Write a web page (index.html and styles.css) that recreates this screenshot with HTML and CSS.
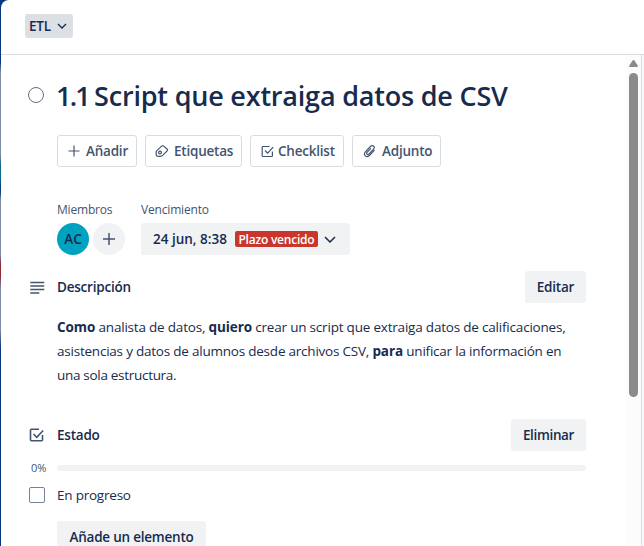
FILE: index.html
```html
<!DOCTYPE html>
<html lang="es">
<head>
<meta charset="utf-8">
<title>1.1 Script que extraiga datos de CSV</title>
<link rel="stylesheet" href="styles.css">
</head>
<body>
<div class="dialog">
  <header class="topbar">
    <button class="list-select"><span>ETL</span>
      <svg width="10" height="6" viewBox="0 0 10 6"><path d="M1 1l4 4 4-4"/></svg>
    </button>
  </header>
  <div class="body">
    <main class="card">
      <div class="title-row">
        <span class="circle"></span>
        <h1><span class="num">1.1 </span>Script que extraiga datos de CSV</h1>
      </div>

      <div class="actions">
        <button class="action add"><svg width="12" height="12" viewBox="0 0 12 12"><path d="M6 .5v11M.5 6h11"/></svg><span>Añadir</span></button>
        <button class="action tags"><svg width="14" height="14" viewBox="0 0 14 14"><path d="M1.600 6.900L7 1.900q.7-.6 1.400 0l3.900 3.400q.7.700 0 1.400L8 11.200Q6.900 12.300 5.400 12.300H3.300Q1.200 12.300 1.200 10.200V7.900q0-.6.400-1z"/><circle cx="5" cy="8.500" r="1.400"/></svg><span>Etiquetas</span></button>
        <button class="action check"><svg width="13" height="13" viewBox="0 0 13 13"><path d="M8.500 1.500H2q-.8 0-.8.8v8.400q0 .8.800.8h8.600q.8 0 .8-.8V6.500M4 5.500l2.600 2.700 5.600-6"/></svg><span>Checklist</span></button>
        <button class="action clip"><svg width="13" height="14" viewBox="0 0 13 14"><path d="M11.500 6.200L6.400 11.500c-3 3-6.800-.8-4-3.700l5-5.300c2.400-2.300 5.200.5 3 2.800L6 9.900c-1.500 1.500-3.200-.2-1.800-1.700L8 4.300"/></svg><span>Adjunto</span></button>
      </div>

      <div class="details">
        <section class="members">
          <h3>Miembros</h3>
          <div class="avatars">
            <span class="avatar">AC</span>
            <button class="round"><svg width="12" height="12" viewBox="0 0 12 12"><path d="M6 0v12M0 6h12"/></svg></button>
          </div>
        </section>
        <section class="due">
          <h3>Vencimiento</h3>
          <button class="date"><span>24 jun, 8:38</span><span class="late">Plazo vencido</span>
            <svg width="12" height="7" viewBox="0 0 12 7"><path d="M1 1l5 5 5-5"/></svg>
          </button>
        </section>
      </div>

      <section class="description">
        <div class="section-head">
          <svg class="icon" width="16" height="13" viewBox="0 0 16 13"><path d="M1.300 1.500h14M1.300 5h14M1.300 8.500h14M1.300 12h9"/></svg>
          <h2>Descripción</h2>
          <button class="btn edit">Editar</button>
        </div>
        <p><span class="l1"><b>Como</b> analista de datos, <b>quiero</b> crear un script que extraiga datos de calificaciones,</span><br>
        <span class="l2">asistencias y datos de alumnos desde archivos CSV, <b>para</b> unificar la información en</span><br>
        <span class="l3">una sola estructura.</span></p>
      </section>

      <section class="checklist">
        <div class="section-head">
          <svg class="icon" width="16" height="14" viewBox="0 0 16 14"><path d="M10 1.200H2.500q-1 0-1 1v9.600q0 1 1 1h10q1 0 1-1V7M4.500 6l3.200 3.300 6.500-6.800"/></svg>
          <h2>Estado</h2>
          <button class="btn delete">Eliminar</button>
        </div>
        <div class="progress"><span class="percent">0%</span><span class="track"></span></div>
        <label class="item"><span class="box"></span><span>En progreso</span></label>
        <button class="btn new">Añade un elemento</button>
      </section>
    </main>
    <div class="scrollbar">
      <svg width="9" height="7" viewBox="0 0 9 7"><path d="M4.500 0Q5 0 5.500.6L8.700 5.500Q9.300 7 8 7H1Q-.3 7 .3 5.500L3.500.6Q4 0 4.500 0z"/></svg>
      <span class="thumb"></span>
    </div>
    <aside class="side"></aside>
  </div>
</div>
</body>
</html>
```
FILE: styles.css
```css
* { box-sizing: border-box; }
body {
  margin: 0;
  height: 546px;
  overflow: hidden;
  padding-left: 1px;
  background: linear-gradient(#09387f 0 62px, #7d8aa3 72px 155px, #0b6b88 165px 178px, #0a3f80 186px 192px, #7d8aa3 200px 255px, #8a2a35 264px 276px, #7d8aa3 288px 330px, #09387f 348px);
  color: #172b4d;
  font: 400 13.5px/20px "Open Sans", "Noto Sans", sans-serif;
}
h1, h2, h3, p { margin: 0; }
button {
  margin: 0;
  padding: 0;
  border: 0;
  border-radius: 3px;
  display: flex;
  align-items: center;
  color: inherit;
  font: 600 13.5px/20px "Open Sans", "Noto Sans", sans-serif;
  letter-spacing: -.22px;
  white-space: nowrap;
}
svg { display: block; flex: none; fill: none; stroke: #44546f; stroke-width: 1.5; }
.dialog {
  height: 546px;
  display: flex;
  flex-direction: column;
  background: #fff;
  border-radius: 8px 0 0 0;
  overflow: hidden;
}
.topbar {
  flex: none;
  height: 55px;
  padding: 14px 24px 0;
  border-bottom: 1px solid #d9dce3;
}
.list-select {
  width: 48px;
  height: 24px;
  padding: 0 5px 0 4px;
  justify-content: space-between;
  background: #dcdfe4;
}
.list-select svg { margin-right: 1px; stroke: #172b4d; stroke-width: 1.3; }
.body { flex: 1; min-height: 0; display: flex; }
.card { flex: 1; min-width: 0; padding: 24px 40px 0 27px; }
.title-row { display: flex; height: 34px; align-items: center; }
.circle {
  width: 16px;
  height: 16px;
  margin-top: -3px;
  border: 1.5px solid #626f86;
  border-radius: 50%;
}
h1 {
  margin-left: 12px;
  font-size: 27px;
  line-height: 34px;
  font-weight: 560;
  letter-spacing: -.2px;
  white-space: nowrap;
}
.num { letter-spacing: -1.8px; }
.actions { display: flex; gap: 8px; margin: 22px 0 0 29px; }
.action {
  height: 32px;
  padding-left: 10px;
  background: #fff;
  border: 1px solid #d9dce3;
  color: #44546f;
}
.action svg { stroke-width: 1.2; }
.add { width: 80px; }
.add span { margin-left: 6px; }
.tags { width: 97px; padding-left: 9px; }
.tags span { margin-left: 5px; }
.check { width: 94px; }
.check span { margin-left: 4px; }
.clip { width: 89px; }
.clip span { margin-left: 6px; }
.details { display: flex; gap: 16px; margin: 35px 0 0 29px; }
h3 {
  font-size: 12px;
  line-height: 16px;
  font-weight: 500;
  letter-spacing: -.18px;
  color: #44546f;
}
.avatars { display: flex; gap: 4px; margin-top: 5px; }
.avatar, .round {
  width: 32px;
  height: 32px;
  border-radius: 50%;
  display: flex;
  align-items: center;
  justify-content: center;
}
.avatar { background: #00a3bf; font-weight: 600; }
.round { background: #f1f2f4; }
.date {
  width: 209px;
  height: 32px;
  margin-top: 5px;
  padding-left: 12px;
  background: #f1f2f4;
  letter-spacing: 0;
}
.date svg { margin-left: 6px; stroke: #172b4d; }
.late {
  height: 16px;
  width: 83px;
  margin-left: 8px;
  text-align: center;
  border-radius: 2px;
  background: #c9372c;
  color: #fff;
  font-size: 12px;
  line-height: 17px;
  letter-spacing: -.22px;
}
.description { margin-top: 16px; }
.section-head { display: flex; align-items: center; height: 32px; }
.icon { margin-left: 1px; stroke-width: 1.6; }
h2 {
  flex: 1;
  margin-left: 12px;
  font-size: 13.5px;
  line-height: 20px;
  font-weight: 600;
  letter-spacing: -.22px;
}
.btn { height: 32px; justify-content: center; background: #f1f2f4; }
.edit { width: 61px; }
.delete { width: 75px; letter-spacing: -.34px; }
.description p {
  margin: 12px 0 0 29px;
  line-height: 24px;
  letter-spacing: -.2px;
  white-space: nowrap;
}
b { font-weight: 700; }
.description b { letter-spacing: -.1px; }
.l2 { letter-spacing: -.22px; }
.l3 { letter-spacing: -.3px; }
.checklist { margin-top: 32px; }
.progress { display: flex; align-items: center; height: 14px; margin-top: 10px; }
.percent { width: 29px; padding-left: 3px; font-size: 11px; letter-spacing: -.1px; color: #44546f; }
.track { flex: 1; height: 6px; border-radius: 3px; background: #f1f2f4; }
.item { display: flex; align-items: center; height: 20px; margin-top: 10px; letter-spacing: -.22px; }
.box {
  width: 16px;
  height: 16px;
  margin: 0 12px 0 1px;
  border: 1px solid #758195;
  border-radius: 2px;
}
.new { width: 149px; margin: 16px 0 0 29px; }
.scrollbar {
  width: 15px;
  padding-top: 5px;
  display: flex;
  flex-direction: column;
  align-items: center;
  background: #fcfcfc;
}
.scrollbar svg { stroke: none; fill: #8b8b8b; }
.thumb { width: 9px; height: 324px; margin-top: 6px; border-radius: 5px; background: #8b8b8b; }
.side { width: 3px; border-left: 1px solid #d9dce3; background: #f7f8f9; }
```
